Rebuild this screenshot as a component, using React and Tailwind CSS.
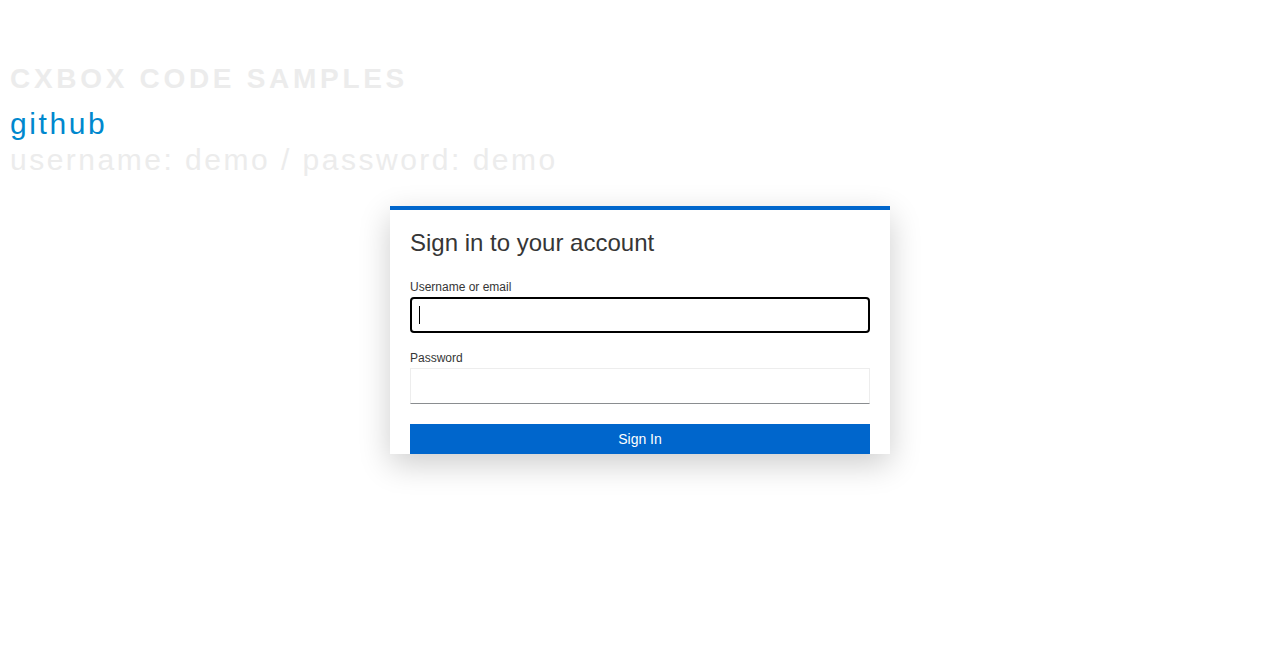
import React from 'react';

const App = () => {
    return (
        <div className="min-h-[661px] bg-white font-['Liberation_Sans',Arial,sans-serif]">
            {/* header block */}
            <div className="pl-[10px] pt-[61px]">
                <div className="text-[28px] font-bold leading-[36px] tracking-[3.7px] text-[#ececec]">
                    CXBOX CODE SAMPLES
                </div>
                <div className="mt-[9px] text-[30px] leading-[36px] tracking-[2.6px] text-[#0088ce]">github</div>
                <div className="text-[30px] leading-[36px] tracking-[2.5px] text-[#ececec]">
                    username: demo / password: demo
                </div>
            </div>

            {/* login card */}
            <div className="mx-auto mt-[28px] h-[248px] w-[500px] overflow-hidden border-t-4 border-[#0066cc] bg-white px-5 pt-5 shadow-[0_10px_30px_rgba(0,0,0,0.2)]">
                <h1 className="text-[24px] leading-[26px] text-[#363636]">Sign in to your account</h1>

                <div className="mt-[22px]">
                    <label className="block text-[12px] leading-[18px] text-[#363636]">Username or email</label>
                    <div className="mt-[1px] flex h-[36px] items-center rounded-[4px] border-2 border-black px-[7px]">
                        <span className="h-[18px] w-px bg-black" />
                    </div>
                </div>

                <div className="mt-[16px]">
                    <label className="block text-[12px] leading-[18px] text-[#363636]">Password</label>
                    <div className="mt-[1px] h-[36px] border border-[#ededed] border-b-[#8a8d90]" />
                </div>

                <button className="mt-[20px] block h-[30px] w-full bg-[#0066cc] text-[14px] leading-[30px] text-white">Sign In</button>
            </div>
        </div>
    );
};

export default App;
